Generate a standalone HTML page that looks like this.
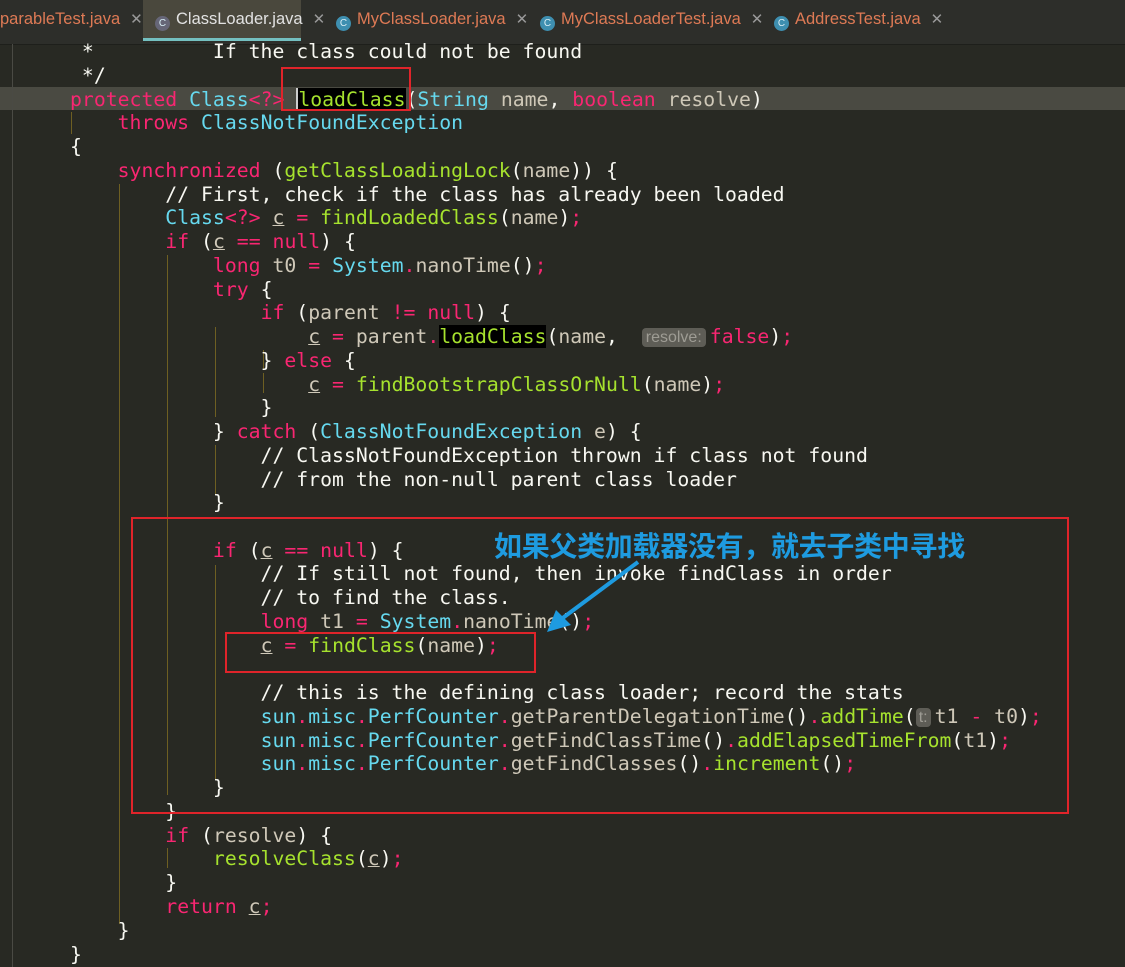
<!DOCTYPE html>
<html><head><meta charset="utf-8"><style>
body{margin:0;width:1125px;height:967px;background:#282923;overflow:hidden;position:relative;font-family:"DejaVu Sans Mono","Liberation Mono",monospace;}
.tabs{position:absolute;left:0;top:0;width:1125px;height:44px;background:#2d2e2a;border-bottom:1px solid #1e1f1b;}
.tab{position:absolute;top:0;height:44px;font:16.5px "Liberation Sans","DejaVu Sans",sans-serif;line-height:38px;color:#e2e2e2;white-space:nowrap}
.tab .x{color:#999;margin-left:10px;font-size:15px}
.ic{display:inline-block;width:15px;height:15px;border-radius:50%;background:#3e8fb0;color:#d8eef5;font-size:10px;line-height:15px;text-align:center;vertical-align:-2px;margin-right:6px}
.act{background:#4a483d;border-bottom:3px solid #74c0c0;height:41px}
.ln{position:absolute;left:70px;height:24px;line-height:24px;font-size:19.8px;color:#f8f8f2;white-space:pre}
.k{color:#f92672}.t{color:#66d9ef}.f{color:#a6e22e}.v{color:#cfc8b8}.u{text-decoration:underline}
.h{display:inline-block;background:#5e5d56;color:#9e9c94;border-radius:4px;font:16px "Liberation Sans",sans-serif;line-height:19px;padding:0 4px;margin:0 4px 0 0;vertical-align:1px}
.g{position:absolute;width:1px;background:#6e5f22}
.box{position:absolute;border:2px solid #e0242a}
</style></head><body>
<div class="tabs">
<div class="tab" style="left:0;color:#de7a55">parableTest.java<span class="x">✕</span></div>
<div class="tab act" style="left:143px;width:158px;padding-left:12px;box-sizing:border-box"><span class="ic" style="background:#667">C</span>ClassLoader.java<span class="x">✕</span></div>
<div class="tab" style="left:336px;color:#de7a55"><span class="ic">C</span>MyClassLoader.java<span class="x">✕</span></div>
<div class="tab" style="left:540px;color:#de7a55"><span class="ic">C</span>MyClassLoaderTest.java<span class="x">✕</span></div>
<div class="tab" style="left:774px;color:#de7a55"><span class="ic">C</span>AddressTest.java<span class="x">✕</span></div>
</div>
<div style="position:absolute;left:0;top:87px;width:1125px;height:23px;background:#4a4a42"></div>
<div style="position:absolute;left:12px;top:44px;width:1px;height:923px;background:#4a4a44"></div>
<div class="g" style="left:71px;top:112px;height:22px"></div>
<div class="g" style="left:119px;top:184px;height:740px"></div>
<div class="g" style="left:167px;top:255px;height:540px"></div>
<div class="g" style="left:167px;top:848px;height:20px"></div>
<div class="g" style="left:215px;top:327px;height:90px"></div>
<div class="g" style="left:215px;top:445px;height:50px"></div>
<div class="g" style="left:215px;top:565px;height:215px"></div>
<div class="g" style="left:263px;top:350px;height:20px"></div>
<div class="g" style="left:263px;top:373px;height:20px"></div>
<div class="ln" style="top:40px"> *          If the class could not be found</div>
<div class="ln" style="top:64px"> */</div>
<div class="ln" style="top:88px"><span class="k">protected</span> <span class="t">Class</span><span class="k">&lt;?&gt;</span> <span class="f" style="background:#000;border-left:2px solid #ccc">loadClass</span>(<span class="t">String</span> <span class="v">name</span>, <span class="k">boolean</span> <span class="v">resolve</span>)</div>
<div class="ln" style="top:111px">    <span class="k">throws</span> <span class="t">ClassNotFoundException</span></div>
<div class="ln" style="top:135px">{</div>
<div class="ln" style="top:159px">    <span class="k">synchronized</span> (<span class="f">getClassLoadingLock</span>(<span class="v">name</span>)) {</div>
<div class="ln" style="top:183px">        // First, check if the class has already been loaded</div>
<div class="ln" style="top:206px">        <span class="t">Class</span><span class="k">&lt;?&gt;</span> <span class="v u">c</span> <span class="k">=</span> <span class="f">findLoadedClass</span>(<span class="v">name</span>)<span class="k">;</span></div>
<div class="ln" style="top:230px">        <span class="k">if</span> (<span class="v u">c</span> <span class="k">==</span> <span class="k">null</span>) {</div>
<div class="ln" style="top:254px">            <span class="k">long</span> <span class="v">t0</span> <span class="k">=</span> <span class="t">System</span><span class="k">.</span><span class="v">nanoTime</span>()<span class="k">;</span></div>
<div class="ln" style="top:278px">            <span class="k">try</span> {</div>
<div class="ln" style="top:301px">                <span class="k">if</span> (<span class="v">parent</span> <span class="k">!=</span> <span class="k">null</span>) {</div>
<div class="ln" style="top:325px">                    <span class="v u">c</span> <span class="k">=</span> <span class="v">parent</span><span class="k">.</span><span class="f" style="background:#000">loadClass</span>(<span class="v">name</span>,  <span class="h">resolve:</span><span class="k">false</span>)<span class="k">;</span></div>
<div class="ln" style="top:349px">                } <span class="k">else</span> {</div>
<div class="ln" style="top:373px">                    <span class="v u">c</span> <span class="k">=</span> <span class="f">findBootstrapClassOrNull</span>(<span class="v">name</span>)<span class="k">;</span></div>
<div class="ln" style="top:396px">                }</div>
<div class="ln" style="top:420px">            } <span class="k">catch</span> (<span class="t">ClassNotFoundException</span> <span class="v">e</span>) {</div>
<div class="ln" style="top:444px">                // ClassNotFoundException thrown if class not found</div>
<div class="ln" style="top:468px">                // from the non-null parent class loader</div>
<div class="ln" style="top:491px">            }</div>
<div class="ln" style="top:539px">            <span class="k">if</span> (<span class="v u">c</span> <span class="k">==</span> <span class="k">null</span>) {</div>
<div class="ln" style="top:562px">                // If still not found, then invoke findClass in order</div>
<div class="ln" style="top:586px">                // to find the class.</div>
<div class="ln" style="top:610px">                <span class="k">long</span> <span class="v">t1</span> <span class="k">=</span> <span class="t">System</span><span class="k">.</span><span class="v">nanoTime</span>()<span class="k">;</span></div>
<div class="ln" style="top:634px">                <span class="v u">c</span> <span class="k">=</span> <span class="f">findClass</span>(<span class="v">name</span>)<span class="k">;</span></div>
<div class="ln" style="top:681px">                // this is the defining class loader; record the stats</div>
<div class="ln" style="top:705px">                <span class="t">sun</span><span class="k">.</span><span class="t">misc</span><span class="k">.</span><span class="t">PerfCounter</span><span class="k">.</span><span class="v">getParentDelegationTime</span>()<span class="k">.</span><span class="f">addTime</span>(<span class="h" style="padding:0 3px">t:</span><span class="v">t1</span> <span class="k">-</span> <span class="v">t0</span>)<span class="k">;</span></div>
<div class="ln" style="top:729px">                <span class="t">sun</span><span class="k">.</span><span class="t">misc</span><span class="k">.</span><span class="t">PerfCounter</span><span class="k">.</span><span class="v">getFindClassTime</span>()<span class="k">.</span><span class="f">addElapsedTimeFrom</span>(<span class="v">t1</span>)<span class="k">;</span></div>
<div class="ln" style="top:752px">                <span class="t">sun</span><span class="k">.</span><span class="t">misc</span><span class="k">.</span><span class="t">PerfCounter</span><span class="k">.</span><span class="v">getFindClasses</span>()<span class="k">.</span><span class="f">increment</span>()<span class="k">;</span></div>
<div class="ln" style="top:776px">            }</div>
<div class="ln" style="top:800px">        }</div>
<div class="ln" style="top:824px">        <span class="k">if</span> (<span class="v">resolve</span>) {</div>
<div class="ln" style="top:847px">            <span class="f">resolveClass</span>(<span class="v u">c</span>)<span class="k">;</span></div>
<div class="ln" style="top:871px">        }</div>
<div class="ln" style="top:895px">        <span class="k">return</span> <span class="v u">c</span><span class="k">;</span></div>
<div class="ln" style="top:919px">    }</div>
<div class="ln" style="top:943px">}</div>
<div class="box" style="left:281px;top:67px;width:126px;height:40px"></div>
<div class="box" style="left:131px;top:517px;width:934px;height:293px"></div>
<div class="box" style="left:225px;top:632px;width:307px;height:37px"></div>
<div style="position:absolute;left:494px;top:527px;font:bold 28px 'Noto Sans CJK SC',sans-serif;color:#1e9be0;white-space:nowrap;line-height:36px;letter-spacing:-0.3px">如果父类加载器没有，就去子类中寻找</div>
<svg style="position:absolute;left:0;top:0" width="1125" height="967"><line x1="638" y1="562" x2="560" y2="620" stroke="#1e9be0" stroke-width="4"/><polygon points="547,632 556,610 571,625" fill="#1e9be0"/></svg>
</body></html>
